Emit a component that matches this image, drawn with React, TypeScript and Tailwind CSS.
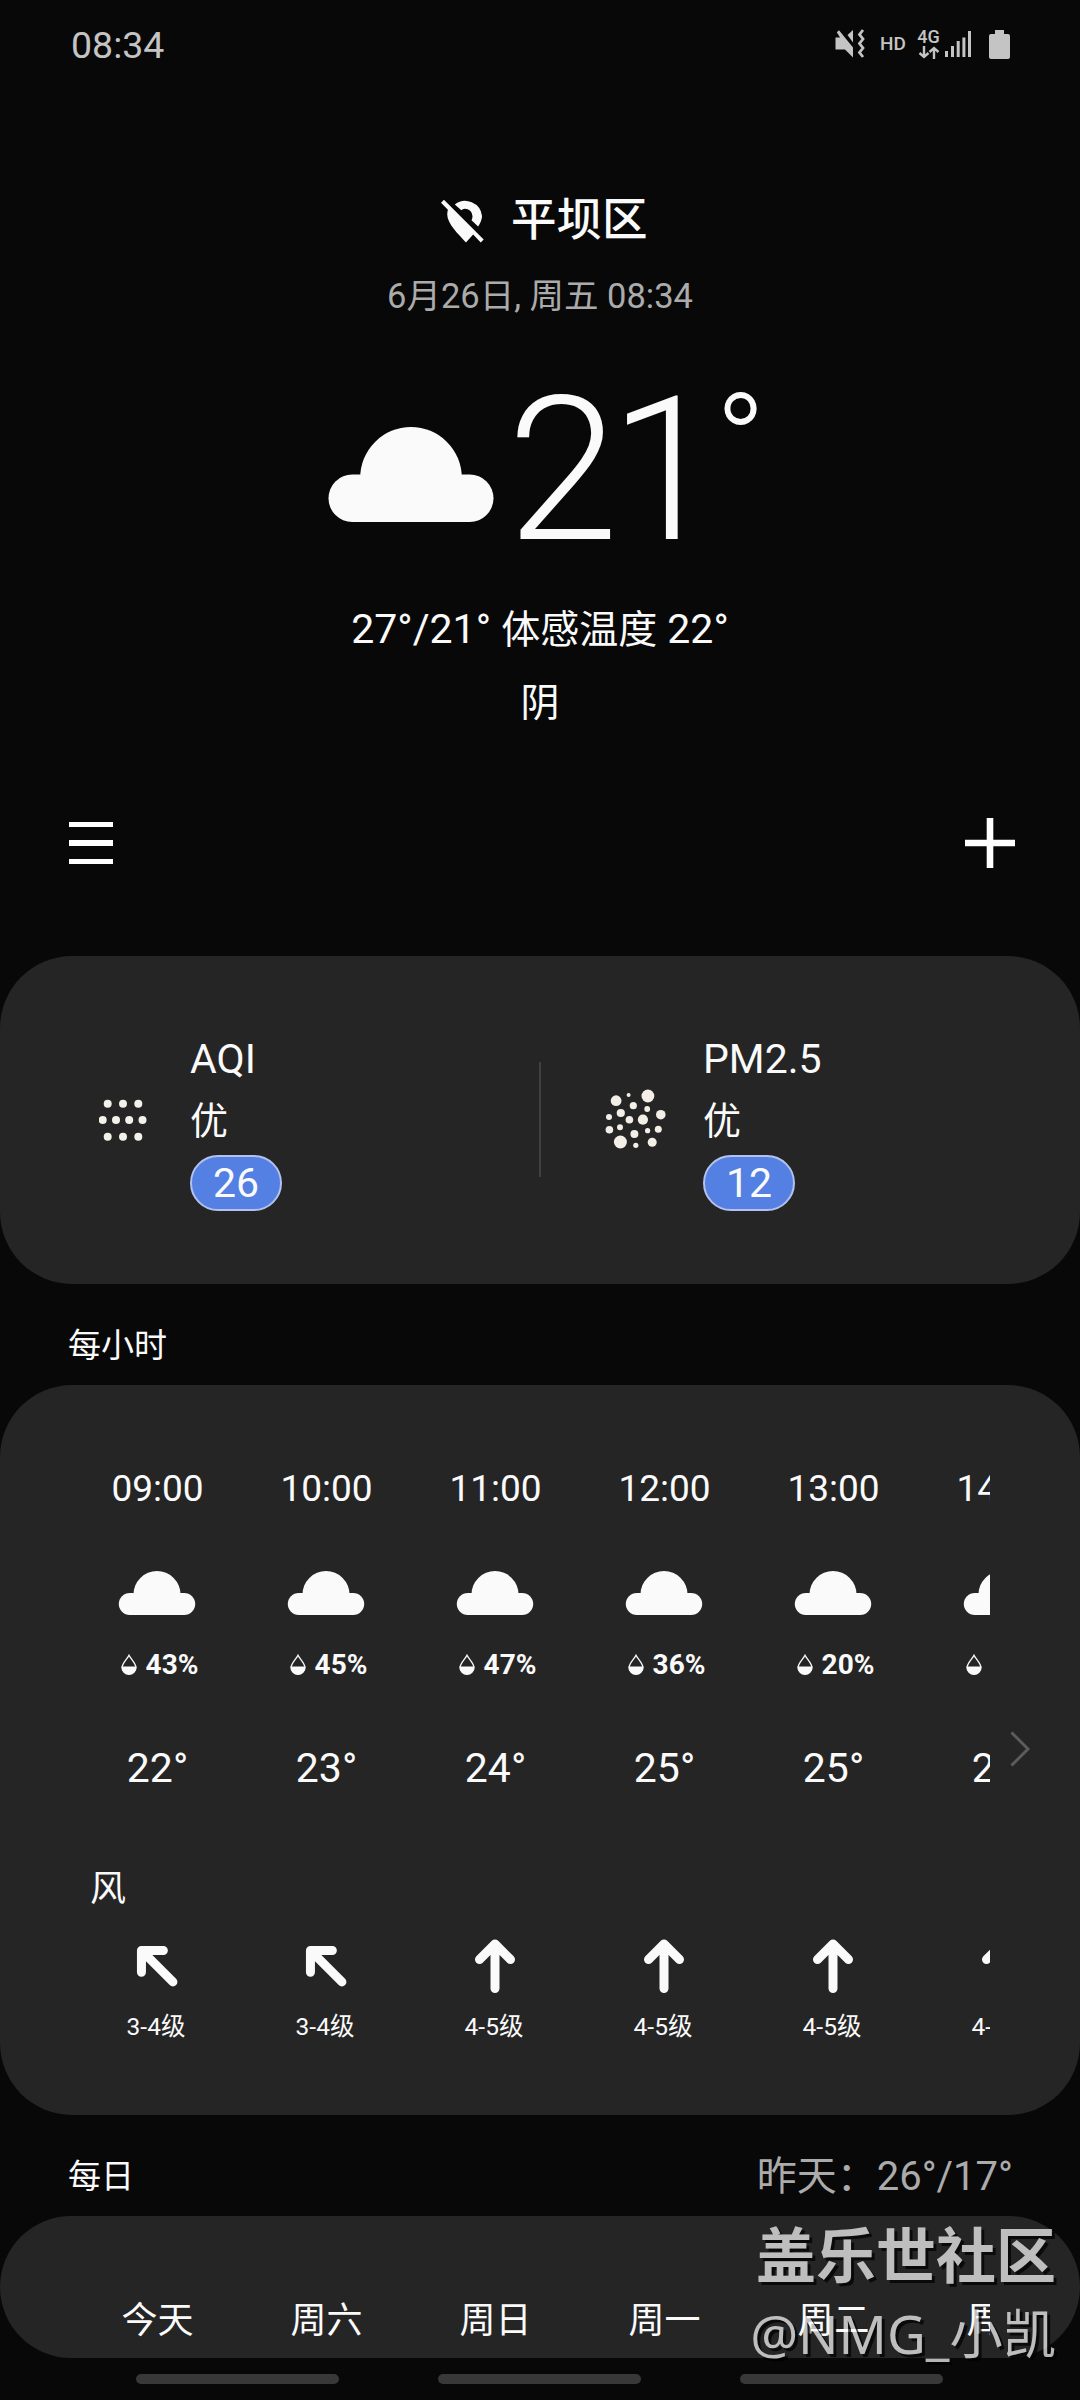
import type { ReactNode } from 'react'

const HOURS = [
  { time: '09:00', rain: '43%', temp: '22°', wind: '3-4级', angle: -45 },
  { time: '10:00', rain: '45%', temp: '23°', wind: '3-4级', angle: -45 },
  { time: '11:00', rain: '47%', temp: '24°', wind: '4-5级', angle: 0 },
  { time: '12:00', rain: '36%', temp: '25°', wind: '4-5级', angle: 0 },
  { time: '13:00', rain: '20%', temp: '25°', wind: '4-5级', angle: 0 },
  { time: '14:00', rain: '20%', temp: '25°', wind: '4-5级', angle: 0 },
]

const DAYS = ['今天', '周六', '周日', '周一', '周二', '周三']

const AQI_DOTS = [
  [6.7, 4.7], [22, 4.7], [37.3, 4.7],
  [1.7, 21], [15, 21], [28.2, 21], [41.5, 21],
  [6.7, 37.7], [22, 37.7], [37.3, 37.7],
]

// x, y, radius
const PM_DOTS = [
  [11.1, 11.7, 5.4], [23.6, 6, 2], [42.9, 7, 6.4], [28.3, 16.7, 3.6], [42.2, 20, 2.9],
  [15.8, 24, 4.1], [4, 28, 3], [55.8, 25.7, 4.8], [24.4, 30.7, 3.8], [37.9, 30.7, 5.1],
  [4.4, 40.7, 3.8], [15, 38.3, 3], [29.4, 45, 4], [42.6, 41.7, 2.6], [53.3, 40.3, 3.5],
  [15.4, 53, 6.5], [47.2, 53.3, 4.5], [30.8, 56.3, 2.6],
]

function Cloud({ className }: { className: string }) {
  return (
    <svg className={className} viewBox="0 0 165 95" fill="#fafafa">
      <circle cx="82.5" cy="50.8" r="50.8" />
      <rect y="47.5" width="165" height="47.5" rx="23.75" />
    </svg>
  )
}

function Drop() {
  return (
    <svg className="w-4 h-[21px]" viewBox="0 0 16 21" fill="none">
      <path d="M8 1.2C6.5 4.5 1 9.5 1 13.5a7 6.8 0 0 0 14 0C15 9.5 9.5 4.5 8 1.2Z" stroke="#fafafa" strokeWidth="1.3" />
      <path d="M.6 12.5h14.8a7.4 7.9 0 0 1-14.8 0Z" fill="#fafafa" />
    </svg>
  )
}

function WindArrow({ angle }: { angle: number }) {
  return (
    <svg className="mr-[2px] w-[54px] h-[54px]" viewBox="0 0 54 54" fill="none" stroke="#fafafa" strokeWidth="9" strokeLinecap="round" strokeLinejoin="round">
      <g transform={`rotate(${angle} 27 27)`}>
        <path d="M27 49.5V6M11.5 20.5L27 5L42.5 20.5" />
        <path d="M20 15h14L27 8z" fill="#fafafa" stroke="none" />
      </g>
    </svg>
  )
}

function StatusBar() {
  return (
    <div className="flex h-[88px] items-center pl-[71px] pr-[70px] text-[#c4c4c4]">
      <span className="flex-1 pt-[2px] text-[37.5px] leading-[88px]">08:34</span>
      <svg className="w-[30px] h-[30px] mr-[15px]" viewBox="0 0 30 30" fill="currentColor">
        <path d="M.5 8.500H5L1.800 3.200L4 1.200L18 18.500V28.5L10 20.5H.5Z" />
        <path d="M12.500 6L18 1V13.500Z" />
        <path d="M28 1L24.5 5.5L28 10L24.5 14.5L28 19L24.5 23.5L28 28" fill="none" stroke="currentColor" strokeWidth="2.8" />
      </svg>
      <span className="w-[26px] text-[19px] leading-[28px] font-medium mr-[11px]">HD</span>
      <div className="flex w-[23px] flex-col items-center mr-[5px]">
        <span className="text-[18px] leading-[15px] font-medium">4G</span>
        <svg className="w-[22px] h-[13px] mt-[2px]" viewBox="0 0 22 13" fill="none" stroke="currentColor" strokeWidth="2.4">
          <path d="M6 0v11M1.500 7l4.500 4l4.500-4M16 13V2M11.500 6l4.500-4l4.500 4" />
        </svg>
      </div>
      <svg className="w-[27px] h-[27px] mr-[17px]" viewBox="0 0 27 27" fill="currentColor">
        <path d="M0 20h3v6H0zM6 15h3v11H6zM11.700 10h3v16h-3zM17.400 6.500h3V26h-3zM23 0h3v26H23z" />
      </svg>
      <svg className="w-[21px] h-[29px]" viewBox="0 0 21 29" fill="currentColor">
        <path d="M6 0h9v4h4a2 2 0 0 1 2 2v21a2 2 0 0 1-2 2H2a2 2 0 0 1-2-2V6a2 2 0 0 1 2-2h4z" />
      </svg>
    </div>
  )
}

function AirItem({ icon, name, level, value }: { icon: ReactNode; name: string; level: string; value: string }) {
  return (
    <div className="flex w-[513px] shrink-0 items-center">
      <div className="flex w-[64px] justify-center">{icon}</div>
      <div className="ml-[35px] flex flex-col items-start">
        <span className="h-[60px] text-[41px] leading-[61px]">{name}</span>
        <span className="h-[62px] text-[38px] leading-[64px]">{level}</span>
        <span className="mt-[4px] flex h-[56px] w-[92px] items-center justify-center rounded-full border-2 border-[#b3c1ee] bg-[#5480e4] text-[41px] leading-[56px]">
          {value}
        </span>
      </div>
    </div>
  )
}

export default function App() {
  return (
    <div className="relative flex h-[2400px] w-[1080px] flex-col overflow-hidden bg-[#080808] text-[#fafafa] font-[Roboto,'Noto_Sans_CJK_SC',sans-serif]">
      <StatusBar />

      {/* Current weather */}
      <div className="mt-[102px] flex h-[60px] items-center pl-[441px]">
        <svg className="w-[43px] h-[45px]" viewBox="362 83 131 134" fill="#fafafa">
          <path d="M404 101A52 52 0 0 1 487 136Q487 150 475 168L455 149Q458 143 458 137A23 23 0 0 0 434 114Q428 114 424 119Z" />
          <path d="M362 96L371 87L492 208L483 217L460 193L438 217C415 192 381 160 381 132Q381 124 383 117Z" />
        </svg>
        <h1 className="ml-[27px] pt-[2px] text-[45.5px] leading-[60px] font-medium">平坝区</h1>
      </div>
      <p className="mt-[21px] h-[50px] text-center text-[34.5px] leading-[51px] text-[#ababab]">6月26日, 周五 08:34</p>

      <div className="mt-[73px] flex h-[150px] items-start pl-[328px]">
        <Cloud className="mt-[33px] w-[166px] h-[95px] shrink-0" />
        <span className="ml-[13px] text-[201px] leading-[153px] font-light tracking-[-9px]">21</span>
        <span className="ml-[3px] text-[135px] leading-[101px] font-light">°</span>
      </div>
      <p className="mt-[55px] h-[60px] text-center text-[41px] leading-[61px]">
        27°/21° <span className="text-[39px]">体感温度</span> 22°
      </p>
      <p className="mt-[19px] text-center text-[39px] leading-[50px]">阴</p>

      <div className="mt-[90px] flex h-[50px] items-center justify-between pl-[69px] pr-[65px]">
        <div className="flex flex-col gap-[13px]">
          <div className="h-[5.500px] w-[44px] bg-white" />
          <div className="h-[5.500px] w-[44px] bg-white" />
          <div className="h-[5.500px] w-[44px] bg-white" />
        </div>
        <svg className="w-[50px] h-[50px]" viewBox="0 0 50 50" fill="#fff">
          <path d="M21.700 0h6.600v21.700H50v6.600H28.300V50h-6.600V28.300H0v-6.600h21.700z" />
        </svg>
      </div>

      {/* Air quality */}
      <div className="relative mt-[88px] flex h-[328px] overflow-hidden rounded-[72px] bg-[#252525] pl-[91px] pt-[73px] items-start">
        <AirItem
          icon={
            <svg className="w-[48px] h-[42px]" viewBox="-2 0 48 42" fill="#f3f1ea">
              {AQI_DOTS.map(([x, y]) => <circle key={`${x}-${y}`} cx={x} cy={y} r="4" />)}
            </svg>
          }
          name="AQI"
          level="优"
          value="26"
        />
        <AirItem
          icon={
            <svg className="w-[62px] h-[62px]" viewBox="0 0 62 62" fill="#f3efe6">
              {PM_DOTS.map(([x, y, r]) => <circle key={`${x}-${y}`} cx={x} cy={y} r={r} />)}
            </svg>
          }
          name="PM2.5"
          level="优"
          value="12"
        />
        <div className="absolute left-[539px] top-[106px] h-[115px] w-[2px] bg-[#404040]" />
      </div>

      {/* Hourly */}
      <h2 className="h-[101px] pl-[68px] pt-[42px] text-[33px] leading-[40px]">每小时</h2>
      <div className="flex h-[730px] items-center rounded-[72px] bg-[#252525] pl-[73px]">
        <div className="h-[730px] w-[917px] overflow-hidden pt-[78px]">
          <div className="flex">
            {HOURS.map((h) => (
              <div key={h.time} className="flex w-[169px] shrink-0 flex-col items-center">
                <span className="text-[37px] leading-[51px]">{h.time}</span>
                <Cloud className="mt-[57px] mr-px w-[78px] h-[44px]" />
                <div className="mt-[34px] flex h-[30px] items-center gap-[9px] pl-[4px]">
                  <Drop />
                  <span className="text-[28px] leading-[31px] font-bold">{h.rain}</span>
                </div>
                <span className="mt-[64px] text-[41px] leading-[50px]">{h.temp}</span>
              </div>
            ))}
          </div>
          <p className="mt-[76px] pl-[17px] text-[36px] leading-[40px]">风</p>
          <div className="mt-[30px] flex">
            {HOURS.map((h) => (
              <div key={h.time} className="flex w-[169px] shrink-0 flex-col items-center">
                <WindArrow angle={h.angle} />
                <span className="mt-[18px] pr-[3px] text-[24.5px] leading-[31px]">{h.wind}</span>
              </div>
            ))}
          </div>
        </div>
        <svg className="mb-[2px] ml-[20px] w-[21px] h-[36px]" viewBox="0 0 21 36" fill="none" stroke="#5c5c5c" strokeWidth="3">
          <path d="M1.500 1.500L18 18L1.500 34.500" />
        </svg>
      </div>

      {/* Daily */}
      <div className="flex h-[101px] justify-between pl-[68px] pr-[67px] pt-[42px] leading-[40px]">
        <h2 className="text-[33px]">每日</h2>
        <span className="text-[40px] text-[#ababab]">昨天：26°/17°</span>
      </div>
      <div className="h-[142px] rounded-[71px] bg-[#252525] pl-[73px] pt-[80px]">
        <div className="flex w-[917px] overflow-hidden">
          {DAYS.map((d) => (
            <span key={d} className="w-[169px] shrink-0 text-center text-[36px] leading-[50px]">{d}</span>
          ))}
        </div>
      </div>

      {/* Gesture hints */}
      <div className="mt-[16px] flex gap-[99px] pl-[136px]">
        <div className="h-[10px] w-[203px] rounded-full bg-[#383838]" />
        <div className="h-[10px] w-[203px] rounded-full bg-[#383838]" />
        <div className="h-[10px] w-[203px] rounded-full bg-[#383838]" />
      </div>

      {/* Watermark */}
      <div className="absolute right-[24px] top-[2218px] flex flex-col items-end whitespace-nowrap text-white opacity-70 [text-shadow:3px_3px_0_#000]">
        <span className="text-[60px] leading-[80px] font-bold">盖乐世社区</span>
        <span className="text-[53.3px] leading-[71px] font-['Noto_Sans','Noto_Sans_CJK_SC',sans-serif]">@NMG_小凯</span>
      </div>
    </div>
  )
}
